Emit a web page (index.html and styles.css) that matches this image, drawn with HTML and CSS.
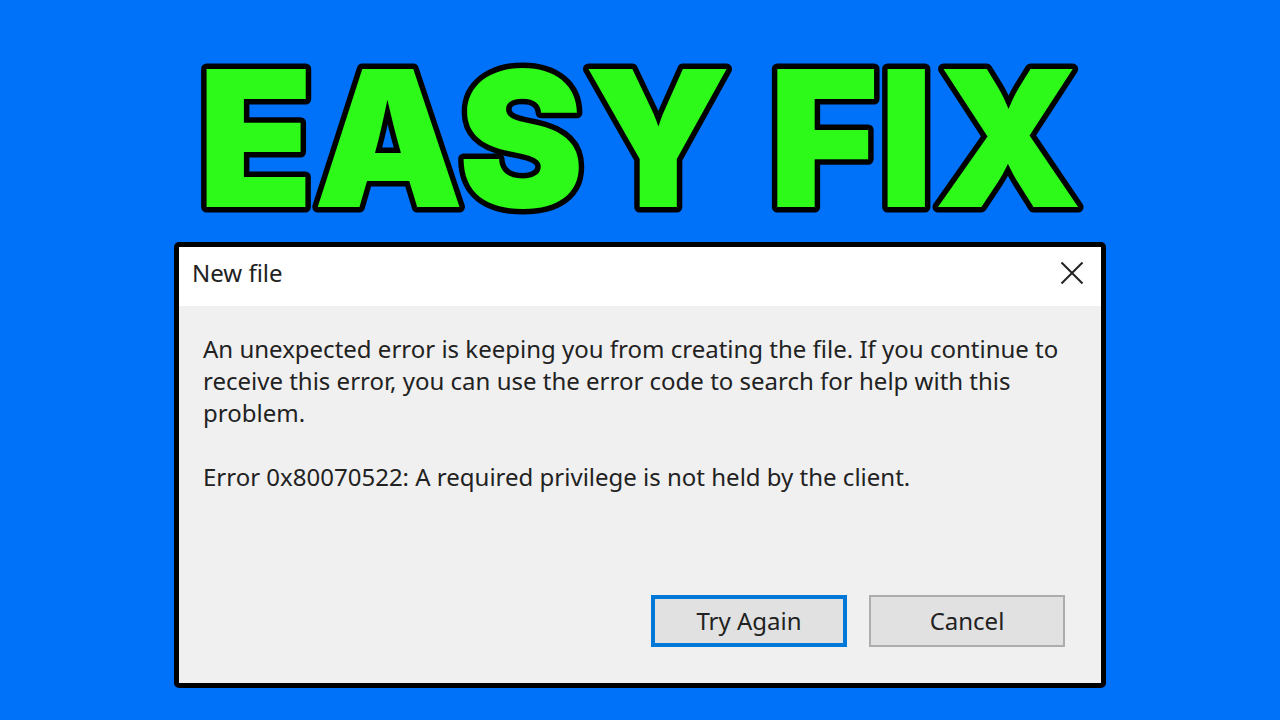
FILE: index.html
```
<!DOCTYPE html>
<html lang="en">
<head>
  <meta charset="UTF-8">
  <meta name="viewport" content="width=device-width, initial-scale=1">
  <title>Easy Fix</title>
  <link rel="stylesheet" href="styles.css">
</head>
<body>
  <h1 class="headline">
    <svg class="headline-art" viewBox="0 0 932 210">
      <text class="headline-text" x="466" y="175">EASY FIX</text>
    </svg>
  </h1>

  <main class="dialog" role="dialog" aria-labelledby="dialogTitle">
    <header class="title-bar">
      <h2 class="dialog-title" id="dialogTitle">New file</h2>
      <button class="close-btn" type="button" aria-label="Close">
        <svg width="24" height="24" viewBox="0 0 24 24" aria-hidden="true">
          <path d="M1.5 1.5 L22.5 22.5 M22.5 1.5 L1.5 22.5" fill="none" stroke="#222" stroke-width="2"/>
        </svg>
      </button>
    </header>

    <div class="message">
      <p>An unexpected error is keeping you from creating the file. If you continue to receive this error, you can use the error code to search for help with this problem.</p>
      <p>Error 0x80070522: A required privilege is not held by the client.</p>
    </div>

    <div class="actions">
      <button class="btn btn-default" type="button">Try Again</button>
      <button class="btn" type="button">Cancel</button>
    </div>
  </main>
</body>
</html>
```
FILE: styles.css
```
* {
  margin: 0;
  padding: 0;
  box-sizing: border-box;
}

body {
  min-height: 100vh;
  display: flex;
  flex-direction: column;
  align-items: center;
  padding: 32px 24px;
  background: #0071f9;
  color: #222;
  font-family: "Noto Sans", "Open Sans", sans-serif;
  font-size: 24px;
  line-height: 32px;
}

.headline {
  width: 100%;
  max-width: 932px;
}

.headline-art {
  display: block;
  width: 100%;
  overflow: visible;
}

/* stroke sits behind the fill so only the outer half shows */
.headline-text {
  fill: #2dfa19;
  stroke: #000;
  stroke-width: 11px;
  stroke-linejoin: round;
  paint-order: stroke fill;
  text-anchor: middle;
  font-family: Inter, sans-serif;
  font-size: 189px;
  font-weight: 900;
}

.dialog {
  width: 100%;
  max-width: 932px;
  background: #f0f0f0;
  border: 5px solid #000;
  border-radius: 5px;
}

.title-bar {
  display: flex;
  align-items: center;
  justify-content: space-between;
  height: 59px;
  padding: 0 17px 8px 13px;
  background: #fff;
}

.dialog-title {
  font-size: 24px;
  font-weight: 400;
}

.close-btn {
  display: flex;
  background: none;
  border: none;
  cursor: pointer;
}

.message {
  padding: 27px 24px 0;
}

.message p {
  margin-bottom: 32px;
}

.actions {
  display: flex;
  justify-content: flex-end;
  gap: 22px;
  padding: 70px 36px 36px;
}

.btn {
  width: 196px;
  height: 52px;
  padding-bottom: 2px;
  background: #e1e1e1;
  border: 2px solid #adadad;
  color: #222;
  font-family: inherit;
  font-size: 24px;
  cursor: pointer;
}

.btn-default {
  border: 4px solid #0078d7;
}
```
